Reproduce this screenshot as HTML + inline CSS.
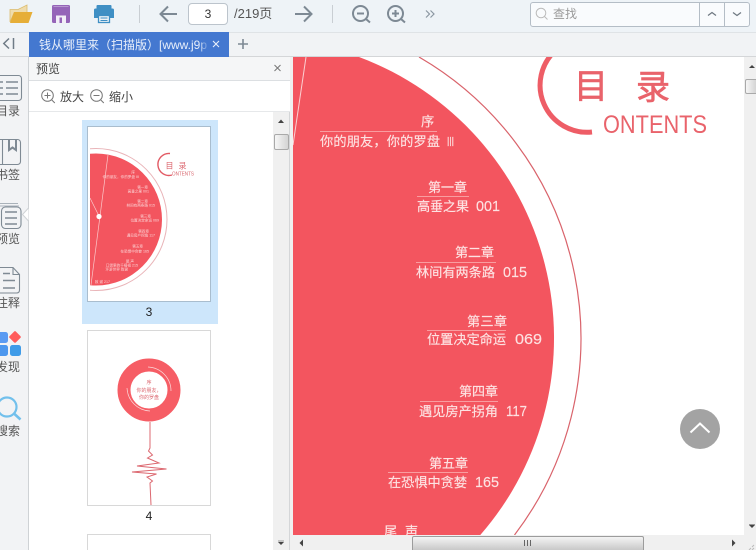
<!DOCTYPE html>
<html lang="zh">
<head>
<meta charset="utf-8">
<title>钱从哪里来</title>
<style>
html,body{margin:0;padding:0;width:756px;height:550px;overflow:hidden;background:#fff}
body{position:relative;font-family:"Liberation Sans","Noto Sans CJK SC",sans-serif;font-size:12px;color:#444}
.a{position:absolute;display:block}
.t{position:absolute;white-space:nowrap;line-height:16px}
svg{position:absolute;overflow:hidden}
svg text{font-family:"Liberation Sans","Noto Sans CJK SC",sans-serif}
</style>
</head>
<body>
<!-- toolbar -->
<div class="a" style="left:0;top:0;width:756px;height:32px;background:#eef3f7;border-bottom:1px solid #dfe3e6"></div>
<!-- tabbar -->
<div class="a" style="left:0;top:33px;width:756px;height:23px;background:#f1f3f5;border-bottom:1px solid #d4d6d8"></div>
<svg style="left:0;top:0" width="530" height="33" viewBox="0 0 530 33">
  <path d="M10 22V9.500h8L27 5v8H14z" fill="#efdcac" stroke="#dcbc6e" stroke-width=".8"/>
  <path d="M10 23 14 12h18.500L28.500 23z" fill="#e6ae38"/>
  <rect x="52" y="5" width="18" height="18" rx="1.500" fill="#9564b8"/>
  <rect x="53.500" y="6" width="15" height="1" fill="#b796d0"/>
  <rect x="56" y="15.500" width="10" height="7.500" fill="#f2eef7"/>
  <rect x="59.500" y="17.500" width="2.500" height="5.500" fill="#9564b8"/>
  <rect x="96.500" y="5" width="15" height="4.500" rx="1" fill="#3f8fc4"/>
  <path d="M94 10q0-1.500 1.500-1.500h17q1.500 0 1.500 1.500V18h-4v-3H98v3h-4z" fill="#3f8fc4"/>
  <rect x="98.500" y="15.500" width="11" height="7" fill="#eef3f7" stroke="#3f8fc4" stroke-width="1.300"/>
  <path d="M100.500 18h7M100.500 20.500h7" stroke="#3f8fc4"/>
  <path d="M139.500 5v18" stroke="#c9ced3"/>
  <path d="M177 14h-16M168 6.500 160.500 14l7.500 7.500" fill="none" stroke="#7d8994" stroke-width="2"/>
  <path d="M295 14h16M304 6.500 311.500 14l-7.500 7.500" fill="none" stroke="#7d8994" stroke-width="2"/>
  <path d="M332.500 5v18" stroke="#c9ced3"/>
  <circle cx="360.500" cy="13.500" r="7.500" fill="none" stroke="#7d8994" stroke-width="2"/>
  <path d="M357 13.500h7M366 19l4 3.500" fill="none" stroke="#7d8994" stroke-width="2"/>
  <circle cx="395.500" cy="13.500" r="7.500" fill="none" stroke="#7d8994" stroke-width="2"/>
  <path d="M392 13.500h7M395.500 10v7M401 19l4 3.500" fill="none" stroke="#7d8994" stroke-width="2"/>
  <path d="M426 10.500l3.500 3.500-3.500 3.500M430.500 10.500l3.500 3.500-3.500 3.500" fill="none" stroke="#8b96a1" stroke-width="1.200"/>
</svg>
<div class="a" style="left:188px;top:3px;width:38px;height:20px;background:#fff;border:1px solid #bcc4cc;border-radius:4px;text-align:center;line-height:21px;color:#333">3</div>
<div class="t" style="left:234px;top:6px;font-size:13px;color:#555">/219页</div>
<!-- search -->
<div class="a" style="left:530px;top:2px;width:218px;height:23px;background:#f9fbfd;border:1px solid #b4bdc6;border-radius:3px"></div>
<div class="a" style="left:699px;top:3px;width:1px;height:23px;background:#b4bdc6"></div>
<div class="a" style="left:724px;top:3px;width:1px;height:23px;background:#b4bdc6"></div>
<div class="t" style="left:553px;top:6px;color:#999">查找</div>
<svg style="left:530px;top:2px" width="226" height="25" viewBox="530 2 226 25">
  <circle cx="541" cy="13" r="4.800" fill="none" stroke="#bbb"/>
  <path d="M544.500 16.500l3 3" stroke="#bbb"/>
  <path d="M708 15.500l4-3 4 3" fill="none" stroke="#6d7780" stroke-width="1.200"/>
  <path d="M733 12.500l4 3 4-3" fill="none" stroke="#6d7780" stroke-width="1.200"/>
</svg>
<!-- tab -->
<svg style="left:0;top:33px" width="28" height="23" viewBox="0 33 28 23">
  <path d="M9 38.500 3.800 43.500 9 48.500" fill="none" stroke="#6f7b86" stroke-width="1.500"/>
  <path d="M13.500 38v11" stroke="#6f7b86" stroke-width="1.500"/>
</svg>
<div class="a" style="left:29px;top:32px;width:200px;height:25px;background:#4478d0"></div>
<div class="t" style="left:39px;top:37px;width:170px;overflow:hidden;color:#e8effa;font-size:12px">钱从哪里来（扫描版）[www.j9p</div>
<div class="a" style="left:198px;top:32px;width:12px;height:25px;background:linear-gradient(90deg,rgba(68,120,208,0),#4478d0)"></div>
<svg style="left:210px;top:33px" width="46" height="23" viewBox="210 33 46 23">
  <path d="M213 41l6 6M219 41l-6 6" stroke="#e8effa" stroke-width="1.100"/>
  <path d="M243 39v10M238 44h10" stroke="#7d8994" stroke-width="1.600"/>
</svg>
<!-- sidebar -->
<div class="a" style="left:0;top:57px;width:28px;height:493px;background:#f2f3f5;border-right:1px solid #cfd2d5"></div>
<svg style="left:0;top:57px" width="29" height="493" viewBox="0 57 29 493">
  <g fill="none" stroke="#7f8a94" stroke-width="1.100">
    <rect x="-5" y="75.500" width="26.500" height="25" rx="3"/>
    <path stroke-width="1.600" d="M0 82h3M6 82h12M0 88h3M6 88h12M0 94h3M6 94h12"/>
    <rect x="-5" y="139.500" width="25.500" height="25" rx="3"/>
    <path d="M2.500 139.500V165"/>
    <path stroke-width="2" d="M9 139.500V150l3.500-2.500 3.500 2.500V139.500"/>
    <path d="M-2 203.500h20M-1 206h20" stroke="#aab2ba"/>
    <rect x="1.500" y="207" width="19.500" height="21.500" rx="4"/>
    <path stroke-width="1.600" d="M5 212h12M5 218h12M5 224h12"/>
    <path d="M-4 267.500H13l6.500 7v15.500q0 3-3 3H-4"/>
    <path d="M13 267.500V274.500h6.500"/>
    <path stroke-width="1.500" d="M3 273.500h7M3 280.500h12M3 288h12"/>
  </g>
  <path d="M28.500 208l-6 6.500 6 6.500z" fill="#fff"/>
  <path d="M28.500 208l-6 6.500 6 6.500" fill="none" stroke="#cfd2d5"/>
  <rect x="-3" y="332" width="11" height="11" rx="2.500" fill="#5b9bf2"/>
  <rect x="10.500" y="332.500" width="9" height="9" rx="1.500" fill="#ff5c5c" transform="rotate(45 15 337)"/>
  <rect x="-3" y="345" width="11" height="11" rx="2.500" fill="#4d97ee"/>
  <rect x="10" y="345" width="11" height="11" rx="2.500" fill="#3f9be8"/>
  <circle cx="7" cy="407" r="9.500" fill="none" stroke="#72c0ec" stroke-width="2.200"/>
  <path d="M14.500 414l6 5.500" stroke="#72c0ec" stroke-width="2.600"/>
</svg>
<div class="t" style="left:-4px;top:103px;color:#555">目录</div>
<div class="t" style="left:-4px;top:167px;color:#555">书签</div>
<div class="t" style="left:-4px;top:231px;color:#555">预览</div>
<div class="t" style="left:-4px;top:295px;color:#555">注释</div>
<div class="t" style="left:-4px;top:359px;color:#555">发现</div>
<div class="t" style="left:-4px;top:423px;color:#555">搜索</div>
<!-- preview panel -->
<div class="a" style="left:29px;top:57px;width:261px;height:23px;background:#f5f6f7;border-bottom:1px solid #dcdfe2"></div>
<div class="t" style="left:36px;top:61px;color:#444">预览</div>
<svg style="left:270px;top:60px" width="16" height="16" viewBox="270 60 16 16">
  <path d="M274.500 65l6 6M280.500 65l-6 6" stroke="#777" stroke-width="1"/>
</svg>
<div class="a" style="left:29px;top:81px;width:261px;height:30px;background:#fff;border-bottom:1px solid #e6e8ea"></div>
<svg style="left:36px;top:85px" width="70" height="22" viewBox="36 85 70 22">
  <circle cx="47.500" cy="95.500" r="5.800" fill="none" stroke="#777"/>
  <path d="M44.500 95.500h6M47.500 92.500v6M51.800 100l3 3" stroke="#777"/>
  <circle cx="96.500" cy="95.500" r="5.800" fill="none" stroke="#777"/>
  <path d="M93.500 95.500h6M100.800 100l3 3" stroke="#777"/>
</svg>
<div class="t" style="left:60px;top:89px;color:#444">放大</div>
<div class="t" style="left:109px;top:89px;color:#444">缩小</div>
<!-- thumbnails -->
<div class="a" style="left:29px;top:112px;width:244px;height:438px;background:#fff"></div>
<div class="a" style="left:82px;top:120px;width:136px;height:204px;background:#cde6fb"></div>
<svg style="left:87px;top:126px" width="125" height="177" viewBox="87 126 125 177">
  <defs><clipPath id="tc"><rect x="90" y="126" width="121" height="176"/></clipPath></defs>
  <rect x="87.500" y="126.500" width="123" height="175" fill="#fff" stroke="#a9bdce"/>
  <g clip-path="url(#tc)">
    <circle cx="96" cy="219.500" r="71" fill="none" stroke="#e9b4b8" stroke-width="1"/>
    <circle cx="96" cy="219.500" r="66" fill="#f3555f"/>
  </g>
  <path d="M108 155 91 285M90 198l9 18" stroke="#fbc9cb" stroke-width=".7" fill="none"/>
  <circle cx="99" cy="216.500" r="2.600" fill="#fff"/>
  <path d="M170 153.500A11 11 0 1 0 172 175" fill="none" stroke="#e25a64" stroke-width="1.400"/>
  <g fill="#dd6a72" font-size="8"><text x="165.500" y="168.500">目</text><text x="178.500" y="168.500">录</text></g>
  <text x="172" y="175.500" font-size="5.500" textLength="22" lengthAdjust="spacingAndGlyphs" fill="#d8656d">ONTENTS</text>
  <g fill="#fbd3d5" font-size="3.600" text-anchor="end">
    <text x="135" y="173.500">序</text>
    <text x="139" y="178">你的朋友，你的罗盘 III</text>
    <text x="148" y="188.500">第一章</text>
    <text x="149" y="192.500">高垂之果 001</text>
    <text x="148" y="202.500">第二章</text>
    <text x="155" y="206.500">林间有两条路 015</text>
    <text x="151" y="217.500">第三章</text>
    <text x="159" y="221.500">位置决定命运 069</text>
    <text x="149" y="232.500">第四章</text>
    <text x="155" y="236.500">遇见房产拐角 117</text>
    <text x="143" y="247.500">第五章</text>
    <text x="149" y="252.500">在恐惧中贪婪 165</text>
    <text x="134" y="262.500">尾 声</text>
    <text x="138" y="266.500">口袋里的千禧祖 215</text>
    <text x="128" y="270.500">环游世界 致谢</text>
    <text x="110" y="283">致 谢 217</text>
  </g>
</svg>
<div class="t" style="left:81px;top:304px;width:136px;text-align:center;color:#222">3</div>
<svg style="left:87px;top:330px" width="125" height="177" viewBox="87 330 125 177">
  <rect x="87.500" y="330.500" width="123" height="175" fill="#fff" stroke="#d8d8d8"/>
  <circle cx="149" cy="390" r="25" fill="none" stroke="#f65d65" stroke-width="13"/>
  <path d="M148 367A24 24 0 0 1 171 391M150 411A24 24 0 0 1 127 388" fill="none" stroke="#fbd9da" stroke-width=".7"/>
  <g fill="#dd6a72" font-size="5" text-anchor="middle">
    <text x="149" y="384">序</text><text x="149" y="392">你的朋友，</text><text x="149" y="399">你的罗盘</text>
  </g>
  <path d="M150 422V448L148.500 451 152.500 455 147.500 458 159 463 137 466 166.500 469 132 472 156.500 474 147 477 152.500 481 150 483 151 505" fill="none" stroke="#dc6870" stroke-width="1"/>
</svg>
<div class="t" style="left:81px;top:508px;width:136px;text-align:center;color:#222">4</div>
<div class="a" style="left:87px;top:534px;width:122px;height:15px;background:#fff;border:1px solid #d8d8d8;border-bottom:0"></div>
<!-- left scrollbar -->
<div class="a" style="left:273px;top:112px;width:17px;height:438px;background:#f0f0f0;border-right:1px solid #d4d6d8;box-sizing:border-box"></div>
<div class="a" style="left:274px;top:134px;width:13px;height:14px;background:linear-gradient(90deg,#f6f6f6,#d4d4d4);border:1px solid #a9a9a9;border-radius:2px"></div>
<svg style="left:273px;top:112px" width="17" height="438" viewBox="273 112 17 438">
  <path d="M278 123l3-3.500 3 3.500z" fill="#444"/>
  <path d="M278 542h6l-3 3z" fill="#444"/>
  <path d="M278 541h6" stroke="#999"/>
</svg>
<!-- main view -->
<div class="a" style="left:290px;top:57px;width:466px;height:493px;background:#f0f0f0"></div>
<svg style="left:293px;top:57px" width="451" height="478" viewBox="293 57 451 478">
  <rect x="293" y="57" width="451" height="478" fill="#fff"/>
  <path d="M293 57H359A300 300 0 0 1 480.300 535H293Z" fill="#f3555f"/>
  <path d="M419 57A325 325 0 0 1 514.500 535" fill="none" stroke="#d9636b" stroke-width="1.200"/>
  <path d="M306 57 293 145" stroke="#fbd0d2" stroke-width="1" fill="none"/>
  <path d="M556 50A47 47 0 0 0 592 132" fill="none" stroke="#ee5d66" stroke-width="5"/>
  <g fill="#e9636b" stroke="#e9636b" stroke-width=".7" font-size="34"><text x="574" y="98">目</text><text x="636" y="99">录</text></g>
  <text x="603" y="133" font-size="25" textLength="104" lengthAdjust="spacingAndGlyphs" fill="#e9636b">ONTENTS</text>
  <g stroke="#fbb5b7" stroke-width=".8">
    <path d="M320 131.500H437M417 196.500H469M416 262.500H496M427 330.500H506M420 401.500H498M388 472.500H468"/>
  </g>
  <g fill="#fde2e2" stroke="#fde2e2" stroke-width=".15" font-size="13.200">
    <text x="421" y="126">序</text>
    <text x="320" y="146" textLength="120">你的朋友，你的罗盘</text>
    <text x="447" y="146" font-size="13" textLength="7" lengthAdjust="spacingAndGlyphs">III</text>
    <text x="428" y="192" textLength="39">第一章</text>
    <text x="417" y="211" textLength="52">高垂之果</text>
    <text x="476" y="211" font-size="15" textLength="24" lengthAdjust="spacingAndGlyphs">001</text>
    <text x="455" y="257" textLength="39">第二章</text>
    <text x="416" y="277" textLength="79">林间有两条路</text>
    <text x="503" y="277" font-size="15" textLength="24" lengthAdjust="spacingAndGlyphs">015</text>
    <text x="467" y="326" textLength="40">第三章</text>
    <text x="427" y="344" textLength="79">位置决定命运</text>
    <text x="515" y="344" font-size="15" textLength="27" lengthAdjust="spacingAndGlyphs">069</text>
    <text x="459" y="396" textLength="39">第四章</text>
    <text x="419" y="416" textLength="79">遇见房产拐角</text>
    <text x="506" y="416" font-size="15" textLength="21" lengthAdjust="spacingAndGlyphs">117</text>
    <text x="429" y="468" textLength="39">第五章</text>
    <text x="388" y="487" textLength="79">在恐惧中贪婪</text>
    <text x="475" y="487" font-size="15" textLength="24" lengthAdjust="spacingAndGlyphs">165</text>
    <text x="384" y="536" textLength="34">尾 声</text>
  </g>
</svg>
<!-- floating top button -->
<svg style="left:680px;top:409px" width="40" height="40" viewBox="0 0 40 40">
  <circle cx="20" cy="20" r="20" fill="#a3a3a3"/>
  <path d="M10.500 23.500 20 14.500l9.500 9" fill="none" stroke="#fff" stroke-width="2"/>
</svg>
<!-- main scrollbars -->
<div class="a" style="left:744px;top:57px;width:12px;height:478px;background:#f0f0f0"></div>
<div class="a" style="left:745px;top:79px;width:10px;height:13px;background:linear-gradient(90deg,#f6f6f6,#d4d4d4);border:1px solid #a9a9a9;border-right:0;border-radius:2px 0 0 2px"></div>
<div class="a" style="left:293px;top:535px;width:463px;height:15px;background:#f0f0f0"></div>
<div class="a" style="left:412px;top:536px;width:230px;height:13px;background:linear-gradient(#f4f4f4,#c8c8c8);border:1px solid #9c9c9c;border-bottom:0;border-radius:2px 2px 0 0"></div>
<svg style="left:290px;top:57px" width="466" height="493" viewBox="290 57 466 493">
  <path d="M749 68l3-3 3 3z" fill="#444"/>
  <path d="M749 525h6l-3 3z" fill="#444"/>
  <path d="M749 524.500h6" stroke="#999"/>
  <path d="M303 539.500v7l-3.500-3.500z" fill="#444"/>
  <path d="M732 539.500v7l3.500-3.500z" fill="#444"/>
  <path d="M524.500 540v6M527.500 540v6M530.500 540v6" stroke="#666"/>
  <path d="M754 545l-2 2M754 548l-2 2M751 548l-2 2" stroke="#bbb"/>
</svg>
</body>
</html>
